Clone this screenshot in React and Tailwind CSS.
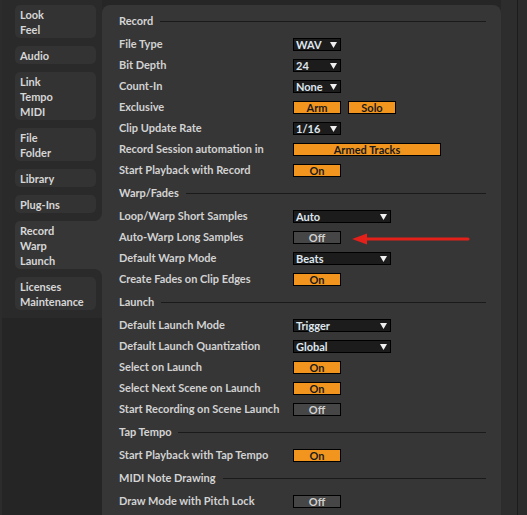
import React from 'react'

const font = { fontFamily: '"Lato", "Liberation Sans", sans-serif' }

const navGroups = [
  ['Look', 'Feel'],
  ['Audio'],
  ['Link', 'Tempo', 'MIDI'],
  ['File', 'Folder'],
  ['Library'],
  ['Plug-Ins'],
]

function NavItem({ lines }) {
  return (
    <div className="rounded-[5px] bg-[#333333] px-[5px] py-[1.5px] text-[11px] font-bold leading-[15px] text-[#d6d6d6]">
      {lines.map((l) => (
        <div key={l}>{l}</div>
      ))}
    </div>
  )
}

function Arrow() {
  return (
    <svg width="7" height="6" viewBox="0 0 7 6" className="shrink-0">
      <path d="M0 0 H7 L3.5 6 Z" fill="#f0f0f0" />
    </svg>
  )
}

function Dropdown({ value, wide }) {
  return (
    <div
      className={`flex h-[13px] items-center justify-between border border-black bg-[#1c1c1c] pl-[2px] pr-[3px] text-[11px] font-bold leading-none text-[#dfe6ee] ${
        wide ? 'w-[98px]' : 'w-[48px]'
      }`}
    >
      <span>{value}</span>
      <Arrow />
    </div>
  )
}

function Toggle({ label, on = true, width = 'w-[48px]' }) {
  return (
    <div
      className={`flex h-[13px] items-center justify-center border border-black text-[11px] font-bold leading-none ${width} ${
        on ? 'bg-[#f2951f] text-[#1a1a1a]' : 'bg-[#464646] text-[#cfcfcf]'
      }`}
    >
      {label}
    </div>
  )
}

function Row({ label, children }) {
  return (
    <div className="flex h-[21px] items-center">
      <div className="w-[174px] shrink-0 text-[11px] font-bold text-[#d2d2d2]">{label}</div>
      <div className="flex items-center gap-[7px]">{children}</div>
    </div>
  )
}

function Header({ title }) {
  return (
    <div className="flex h-[25px] items-center pr-[15px]">
      <span className="text-[11px] font-bold text-[#d4d4d4]">{title}</span>
      <div className="ml-[7px] h-px flex-1 bg-[#1a1a1a]" />
    </div>
  )
}

export default function App() {
  return (
    <div className="relative flex h-[515px] w-[527px] overflow-hidden bg-[#262626]" style={font}>
      {/* sidebar */}
      <div className="flex w-[102px] shrink-0 flex-col border-l-2 border-[#2c2c2c]">
        <div className="bg-[#363636]">
          <div className="flex flex-col gap-[8px] rounded-br-[8px] bg-[#2a2a2a] pb-[8px] pl-[13px] pr-[6px] pt-[5px]">
            {navGroups.map((g) => (
              <NavItem key={g[0]} lines={g} />
            ))}
          </div>
        </div>
        <div className="flex bg-[#2a2a2a]">
          <div className="ml-[13px] flex-1 rounded-l-[5px] bg-[#363636]">
            <div className="px-[5px] py-[1.5px] text-[11px] font-bold leading-[15px] text-[#d6d6d6]">
              <div>Record</div>
              <div>Warp</div>
              <div>Launch</div>
            </div>
          </div>
        </div>
        <div className="bg-[#363636]">
          <div className="rounded-tr-[8px] bg-[#2a2a2a] pb-[8px] pl-[13px] pr-[6px] pt-[8px]">
            <NavItem lines={['Licenses', 'Maintenance']} />
          </div>
        </div>
        <div className="flex-1 bg-[#252525]" />
      </div>

      {/* main panel */}
      <div className="mt-[5px] w-[399px] shrink-0 rounded-t-[8px] bg-[#363636] pl-[17px] pt-[4px]">
        <Header title="Record" />
        <Row label="File Type"><Dropdown value="WAV" /></Row>
        <Row label="Bit Depth"><Dropdown value="24" /></Row>
        <Row label="Count-In"><Dropdown value="None" /></Row>
        <Row label="Exclusive">
          <Toggle label="Arm" />
          <Toggle label="Solo" />
        </Row>
        <Row label="Clip Update Rate"><Dropdown value="1/16" /></Row>
        <Row label="Record Session automation in"><Toggle label="Armed Tracks" width="w-[148px]" /></Row>
        <Row label="Start Playback with Record"><Toggle label="On" /></Row>

        <Header title="Warp/Fades" />
        <Row label="Loop/Warp Short Samples"><Dropdown value="Auto" wide /></Row>
        <Row label="Auto-Warp Long Samples"><Toggle label="Off" on={false} /></Row>
        <Row label="Default Warp Mode"><Dropdown value="Beats" wide /></Row>
        <Row label="Create Fades on Clip Edges"><Toggle label="On" /></Row>

        <Header title="Launch" />
        <Row label="Default Launch Mode"><Dropdown value="Trigger" wide /></Row>
        <Row label="Default Launch Quantization"><Dropdown value="Global" wide /></Row>
        <Row label="Select on Launch"><Toggle label="On" /></Row>
        <Row label="Select Next Scene on Launch"><Toggle label="On" /></Row>
        <Row label="Start Recording on Scene Launch"><Toggle label="Off" on={false} /></Row>

        <Header title="Tap Tempo" />
        <Row label="Start Playback with Tap Tempo"><Toggle label="On" /></Row>

        <Header title="MIDI Note Drawing" />
        <Row label="Draw Mode with Pitch Lock"><Toggle label="Off" on={false} /></Row>
      </div>

      {/* right edge */}
      <div className="w-[16px] shrink-0 bg-[#2d2d2d]" />
      <div className="w-px shrink-0 bg-[#1c1c1c]" />
      <div className="flex-1 bg-[#2c2c2c]" />

      {/* red annotation arrow */}
      <svg className="absolute left-[350px] top-[231px]" width="122" height="16" viewBox="0 0 122 16">
        <path d="M14 8 H118" stroke="#e4201b" strokeWidth="3" strokeLinecap="round" />
        <path d="M2 8 L17 2.5 L17 13.5 Z" fill="#e4201b" />
      </svg>
    </div>
  )
}
